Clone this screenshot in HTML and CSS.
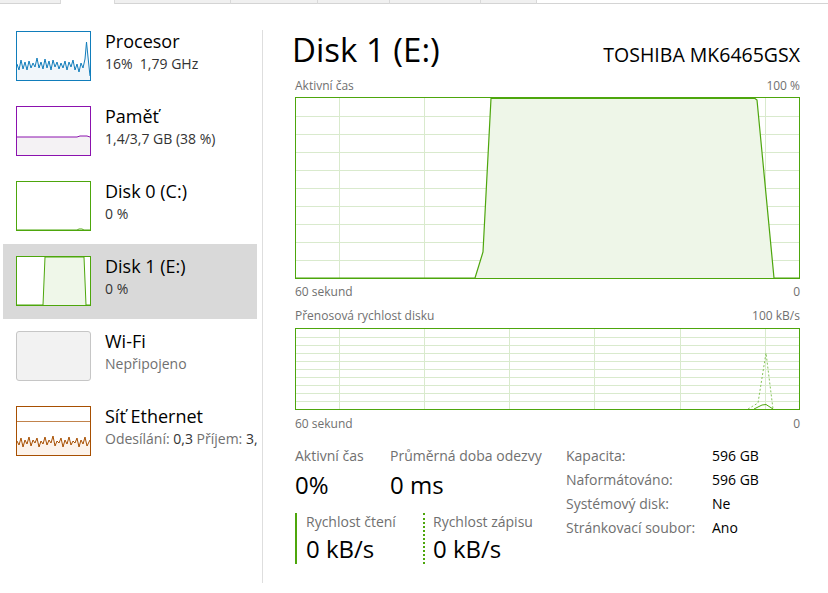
FILE: index.html
```html
<!DOCTYPE html>
<html lang="cs">
<head>
<meta charset="utf-8">
<title>Správce úloh – Výkon</title>
<link rel="stylesheet" href="styles.css">
</head>
<body>
<div class="tabs">
  <div class="tab t1"></div>
  <div class="tab sel"></div>
  <div class="tab t3"></div>
  <div class="tab t4"></div>
  <div class="tab t5"></div>
  <div class="tab t6"></div>
  <div class="tab t7"></div>
  <div class="tab-rest"></div>
</div>
<div class="main">
  <aside class="sidebar">
    <div class="item">
      <div class="thumb cpu">
        <svg width="73" height="48" viewBox="0 0 73 48">
          <polygon class="cpu-fill" points="0,32 2,38 4,28 6,37 8,30 10,38 12,29 14,36 16,31 18,35 20,26 22,36 24,30 26,37 28,27 30,36 32,29 34,38 36,28 38,35 40,30 42,37 44,31 46,36 48,29 50,38 52,30 54,35 56,28 58,38 60,32 62,40 64,31 66,36 68,27 69.5,10 71,25 73,44 73,48 0,48"/>
          <polyline class="cpu-line" points="0,32 2,38 4,28 6,37 8,30 10,38 12,29 14,36 16,31 18,35 20,26 22,36 24,30 26,37 28,27 30,36 32,29 34,38 36,28 38,35 40,30 42,37 44,31 46,36 48,29 50,38 52,30 54,35 56,28 58,38 60,32 62,40 64,31 66,36 68,27 69.5,10 71,25 73,44"/>
        </svg>
      </div>
      <div class="info">
        <div class="name">Procesor</div>
        <div class="sub"><span class="val">16%&nbsp; 1,79 GHz</span></div>
      </div>
    </div>
    <div class="item">
      <div class="thumb mem">
        <svg width="73" height="48" viewBox="0 0 73 48">
          <polygon class="mem-fill" points="0,30 60,30 63,29 70,29 73,30 73,48 0,48"/>
          <polyline class="mem-line" points="0,30 60,30 63,29 70,29 73,30"/>
        </svg>
      </div>
      <div class="info">
        <div class="name">Paměť</div>
        <div class="sub"><span class="val">1,4/3,7 GB (38 %)</span></div>
      </div>
    </div>
    <div class="item">
      <div class="thumb disk">
        <svg width="73" height="48" viewBox="0 0 73 48">
          <polyline class="disk-line" points="0,48 60,48 62,47 65,47 67,48 73,48"/>
        </svg>
      </div>
      <div class="info">
        <div class="name">Disk 0 (C:)</div>
        <div class="sub"><span class="val">0 %</span></div>
      </div>
    </div>
    <div class="item selected">
      <div class="thumb disk white">
        <svg width="73" height="48" viewBox="0 0 73 48">
          <polygon class="disk-fill" points="26,48 28,0 67,0 69,48"/>
          <polyline class="disk-line" points="0,48 26,48 28,0 67,0 69,48 73,48"/>
        </svg>
      </div>
      <div class="info">
        <div class="name">Disk 1 (E:)</div>
        <div class="sub"><span class="val">0 %</span></div>
      </div>
    </div>
    <div class="item">
      <div class="thumb wifi"></div>
      <div class="info">
        <div class="name">Wi-Fi</div>
        <div class="sub"><span class="lbl">Nepřipojeno</span></div>
      </div>
    </div>
    <div class="item last">
      <div class="thumb eth">
        <svg width="73" height="48" viewBox="0 0 73 48">
          <line class="eth-scale" x1="0" y1="14.5" x2="73" y2="14.5"/>
          <polygon class="eth-fill" points="0,34 2,38 4,31 6,40 8,33 10,37 12,30 14,39 16,33 18,36 20,31 22,40 24,34 26,37 28,30 30,38 32,33 34,36 36,29 38,39 40,34 42,36 44,31 46,40 48,33 50,37 52,30 54,38 56,34 58,36 60,31 62,40 64,33 66,37 68,30 70,39 73,33 73,48 0,48"/>
          <polyline class="eth-line" points="0,34 2,38 4,31 6,40 8,33 10,37 12,30 14,39 16,33 18,36 20,31 22,40 24,34 26,37 28,30 30,38 32,33 34,36 36,29 38,39 40,34 42,36 44,31 46,40 48,33 50,37 52,30 54,38 56,34 58,36 60,31 62,40 64,33 66,37 68,30 70,39 73,33"/>
        </svg>
      </div>
      <div class="info">
        <div class="name">Síť Ethernet</div>
        <div class="sub"><span class="lbl">Odesílání:</span> <span class="val">0,3</span> <span class="lbl">Příjem:</span> <span class="val">3,</span></div>
      </div>
    </div>
  </aside>
  <div class="divider"></div>
  <section class="detail">
    <div class="header">
      <h1 class="title">Disk 1 (E:)</h1>
      <div class="model">TOSHIBA MK6465GSX</div>
    </div>
    <div class="glabel top-label"><span>Aktivní čas</span><span>100 %</span></div>
    <div class="graph g1">
      <svg width="503" height="180" viewBox="0 0 503 180">
        <g class="grid">
          <line x1="43.5" y1="0" x2="43.5" y2="180"/>
          <line x1="128.5" y1="0" x2="128.5" y2="180"/>
          <line x1="213.5" y1="0" x2="213.5" y2="180"/>
          <line x1="298.5" y1="0" x2="298.5" y2="180"/>
          <line x1="384.5" y1="0" x2="384.5" y2="180"/>
          <line x1="469.5" y1="0" x2="469.5" y2="180"/>
          <line x1="0" y1="18.5" x2="503" y2="18.5"/>
          <line x1="0" y1="36.5" x2="503" y2="36.5"/>
          <line x1="0" y1="54.5" x2="503" y2="54.5"/>
          <line x1="0" y1="72.5" x2="503" y2="72.5"/>
          <line x1="0" y1="90.5" x2="503" y2="90.5"/>
          <line x1="0" y1="108.5" x2="503" y2="108.5"/>
          <line x1="0" y1="126.5" x2="503" y2="126.5"/>
          <line x1="0" y1="144.5" x2="503" y2="144.5"/>
          <line x1="0" y1="162.5" x2="503" y2="162.5"/>
        </g>
        <polygon class="area" points="179,180 187,154 195,0 459,0 461,2 478,180"/>
        <polyline class="trace" points="0,180 179,180 187,154 195,0.5 459,0.5 461,2 478,180 503,180"/>
      </svg>
    </div>
    <div class="glabel"><span>60 sekund</span><span>0</span></div>
    <div class="glabel second-label"><span>Přenosová rychlost disku</span><span>100 kB/s</span></div>
    <div class="graph g2">
      <svg width="503" height="80" viewBox="0 0 503 80">
        <g class="grid">
          <line x1="43.5" y1="0" x2="43.5" y2="80"/>
          <line x1="128.5" y1="0" x2="128.5" y2="80"/>
          <line x1="213.5" y1="0" x2="213.5" y2="80"/>
          <line x1="298.5" y1="0" x2="298.5" y2="80"/>
          <line x1="384.5" y1="0" x2="384.5" y2="80"/>
          <line x1="469.5" y1="0" x2="469.5" y2="80"/>
          <line x1="0" y1="8.5" x2="503" y2="8.5"/>
          <line x1="0" y1="16.5" x2="503" y2="16.5"/>
          <line x1="0" y1="24.5" x2="503" y2="24.5"/>
          <line x1="0" y1="32.5" x2="503" y2="32.5"/>
          <line x1="0" y1="40.5" x2="503" y2="40.5"/>
          <line x1="0" y1="48.5" x2="503" y2="48.5"/>
          <line x1="0" y1="56.5" x2="503" y2="56.5"/>
          <line x1="0" y1="64.5" x2="503" y2="64.5"/>
          <line x1="0" y1="72.5" x2="503" y2="72.5"/>
        </g>
        <polyline class="trace-dash" points="452,80 462,74 470,24 477,80"/>
        <polyline class="trace-thin" points="458,80 466,76 470,75.5 477,80"/>
      </svg>
    </div>
    <div class="glabel bottom-label"><span>60 sekund</span><span>0</span></div>

    <div class="stats">
      <div class="stats-left">
        <div class="row1">
          <div class="stat s-active">
            <div class="slabel">Aktivní čas</div>
            <div class="svalue">0%</div>
          </div>
          <div class="stat">
            <div class="slabel">Průměrná doba odezvy</div>
            <div class="svalue">0 ms</div>
          </div>
        </div>
        <div class="row2">
          <div class="rw read">
            <div class="slabel">Rychlost čtení</div>
            <div class="svalue">0 kB/s</div>
          </div>
          <div class="rw write">
            <div class="slabel">Rychlost zápisu</div>
            <div class="svalue">0 kB/s</div>
          </div>
        </div>
      </div>
      <dl class="props">
        <dt>Kapacita:</dt><dd>596 GB</dd>
        <dt>Naformátováno:</dt><dd>596 GB</dd>
        <dt>Systémový disk:</dt><dd>Ne</dd>
        <dt>Stránkovací soubor:</dt><dd>Ano</dd>
      </dl>
    </div>
  </section>
</div>
</body>
</html>
```

FILE: styles.css
```css
* { box-sizing: border-box; }

html, body {
  margin: 0;
  padding: 0;
  background: #ffffff;
}

body {
  width: 828px;
  height: 593px;
  overflow: hidden;
  font-family: "Open Sans", "Noto Sans", "DejaVu Sans", sans-serif;
  color: #000;
}

/* tab strip remnant */
.tabs {
  display: flex;
  height: 4px;
}
.tab {
  height: 4px;
  background: #f0f0f0;
  border-right: 1px solid #d9d9d9;
  border-bottom: 1px solid #d4d4d4;
}
.tab.t1 { width: 61px; }
.tab.sel { width: 54px; background: #fff; border-bottom: none; border-right: 1px solid #d9d9d9; }
.tab.t3 { width: 116px; }
.tab.t4 { width: 87px; }
.tab.t5 { width: 72px; }
.tab.t6 { width: 91px; }
.tab.t7 { width: 56px; }
.tab-rest { flex: 1; border-bottom: 1px solid #d4d4d4; }

.main {
  display: flex;
  align-items: flex-start;
}

/* sidebar */
.sidebar {
  width: 262px;
  padding-top: 15px;
  flex: none;
}
.item {
  display: flex;
  align-items: flex-start;
  width: 254px;
  height: 75px;
  margin-left: 3px;
  padding: 11px 0 0 13px;
}
.item.selected { background: #d9d9d9; }

.thumb {
  flex: none;
  width: 75px;
  height: 50px;
  margin-top: 1px;
  border: 1px solid;
  background: #fff;
}
.thumb svg { display: block; }
.thumb.cpu { border-color: #117dbb; }
.thumb.mem { border-color: #8b12ae; }
.thumb.disk { border-color: #4da60c; }
.thumb.wifi { border-color: #c6c6c6; background: #f2f2f2; border-radius: 3px; }
.thumb.eth { border-color: #a74f01; }

.cpu-fill { fill: #f1f6fa; stroke: none; }
.cpu-line { fill: none; stroke: #117dbb; stroke-width: 1; }
.mem-fill { fill: #f4f2f4; stroke: none; }
.mem-line { fill: none; stroke: #8b12ae; stroke-width: 1; }
.disk-fill { fill: #eff7e9; stroke: none; }
.disk-line { fill: none; stroke: #4da60c; stroke-width: 1; }
.eth-scale { stroke: #a74f01; stroke-width: 1; opacity: 0.7; }
.eth-fill { fill: #fcf3eb; stroke: none; }
.eth-line { fill: none; stroke: #a74f01; stroke-width: 1; }

.info {
  margin-left: 14px;
  white-space: nowrap;
}
.name {
  font-size: 18px;
  line-height: 23px;
  color: #000;
}
.sub {
  font-size: 14px;
  line-height: 19px;
  margin-top: 1px;
}
.sub .val { color: #333; }
.sub .lbl { color: #707070; }

.divider {
  flex: none;
  width: 1px;
  height: 553px;
  margin-top: 26px;
  background: #dedede;
}

/* detail panel */
.detail {
  width: 537px;
  padding: 26px 0 0 32px;
  flex: none;
}
.header {
  display: flex;
  justify-content: space-between;
  align-items: baseline;
  width: 505px;
}
.title {
  margin: 0 0 0 -3px;
  font-size: 33px;
  line-height: 40px;
  font-weight: normal;
  color: #000;
}
.model {
  font-size: 19.5px;
  line-height: 24px;
  color: #000;
}

.glabel {
  display: flex;
  justify-content: space-between;
  width: 505px;
  font-size: 12px;
  line-height: 16px;
  color: #707070;
  margin-top: 5px;
}
.glabel.top-label { margin-top: 8px; margin-bottom: 3px; }
.glabel.second-label { margin-top: 8px; margin-bottom: 4px; }
.glabel.bottom-label { margin-top: 6px; }

.graph {
  width: 505px;
  border: 1px solid #4da60c;
  background: #fff;
}
.graph svg { display: block; }
.g1 { height: 182px; }
.g2 { height: 82px; }

.grid line { stroke: #d9eacd; stroke-width: 1; }
.area { fill: #eef6e8; stroke: none; }
.trace { fill: none; stroke: #4da60c; stroke-width: 1.2; }
.trace-dash { fill: none; stroke: #86c45a; stroke-width: 1; stroke-dasharray: 2 2; }
.trace-thin { fill: none; stroke: #4da60c; stroke-width: 1; }

/* stats */
.stats {
  display: flex;
  margin-top: 12px;
}
.stats-left { width: 271px; flex: none; }
.row1 { display: flex; }
.stat.s-active { width: 95px; }
.slabel {
  font-size: 14px;
  line-height: 24px;
  color: #707070;
  white-space: nowrap;
}
.svalue {
  font-size: 24px;
  line-height: 34px;
  color: #000;
  white-space: nowrap;
}
.row2 {
  display: flex;
  margin-top: 11px;
}
.rw {
  height: 51px;
  padding-left: 9px;
}
.rw .slabel { line-height: 18px; }
.rw .svalue { line-height: 36px; }
.rw.read { width: 128px; border-left: 2px solid #4da60c; }
.rw.write { border-left: 2px dotted #4da60c; padding-left: 8px; }

.props {
  display: grid;
  grid-template-columns: 146px auto;
  grid-auto-rows: 24px;
  margin: 0;
  font-size: 14px;
  line-height: 24px;
}
.props dt { color: #707070; white-space: nowrap; }
.props dd { margin: 0; color: #000; white-space: nowrap; }
```
